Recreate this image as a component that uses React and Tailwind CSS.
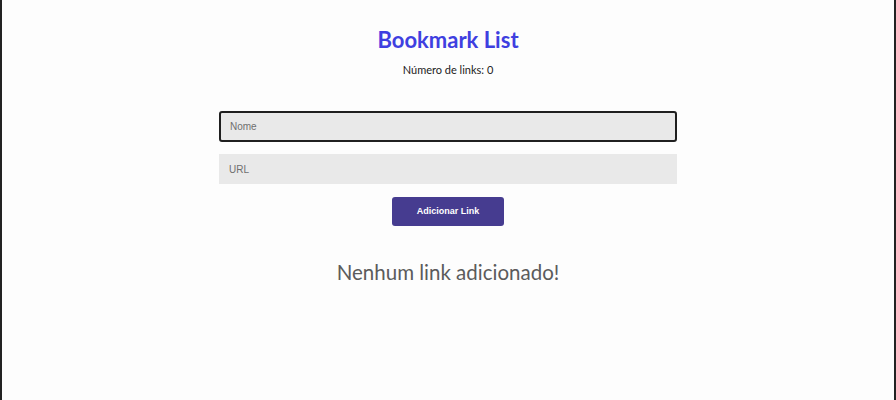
import React, { useState } from 'react';

const App = () => {
    const [nome, setNome] = useState('');
    const [url, setUrl] = useState('');
    const [links] = useState([]);

    return (
        <div className="h-[400px] w-[896px] bg-[#fdfdfd] border-x-2 border-[#222] flex flex-col items-center font-['Lato',sans-serif]">
            {/* HEADER */}
            <h1 className="mt-[27px] text-[22px] leading-[26px] font-bold text-[#3f3fe0]">Bookmark List</h1>
            <p className="mt-[10px] text-[11px] leading-[14px] text-[#222]">Número de links: {links.length}</p>

            {/* FORM */}
            <div className="mt-[34px] w-[458px] flex flex-col items-center">
                <input
                    autoFocus
                    value={nome}
                    onChange={(e) => setNome(e.target.value)}
                    placeholder="Nome"
                    className="w-full h-[31px] px-[9px] bg-[#e9e9e9] border-2 border-[#1f1f1f] rounded-[3px] text-[10px] font-['Liberation_Sans',sans-serif] placeholder:text-[#6f6f6f] outline-none"
                />
                <input
                    value={url}
                    onChange={(e) => setUrl(e.target.value)}
                    placeholder="URL"
                    className="mt-[12px] w-full h-[30px] px-[10px] bg-[#e9e9e9] text-[10px] font-['Liberation_Sans',sans-serif] placeholder:text-[#6f6f6f] outline-none"
                />
                <button className="mt-[13px] w-[112px] h-[29px] bg-[#463c90] rounded-[3px] text-white text-[9px] font-bold font-['Liberation_Sans',sans-serif]">
                    Adicionar Link
                </button>
            </div>

            {/* EMPTY STATE */}
            <p className="mt-[33px] text-[20.5px] leading-[26px] text-[#5b5b5b]">Nenhum link adicionado!</p>
        </div>
    );
};

export default App;
